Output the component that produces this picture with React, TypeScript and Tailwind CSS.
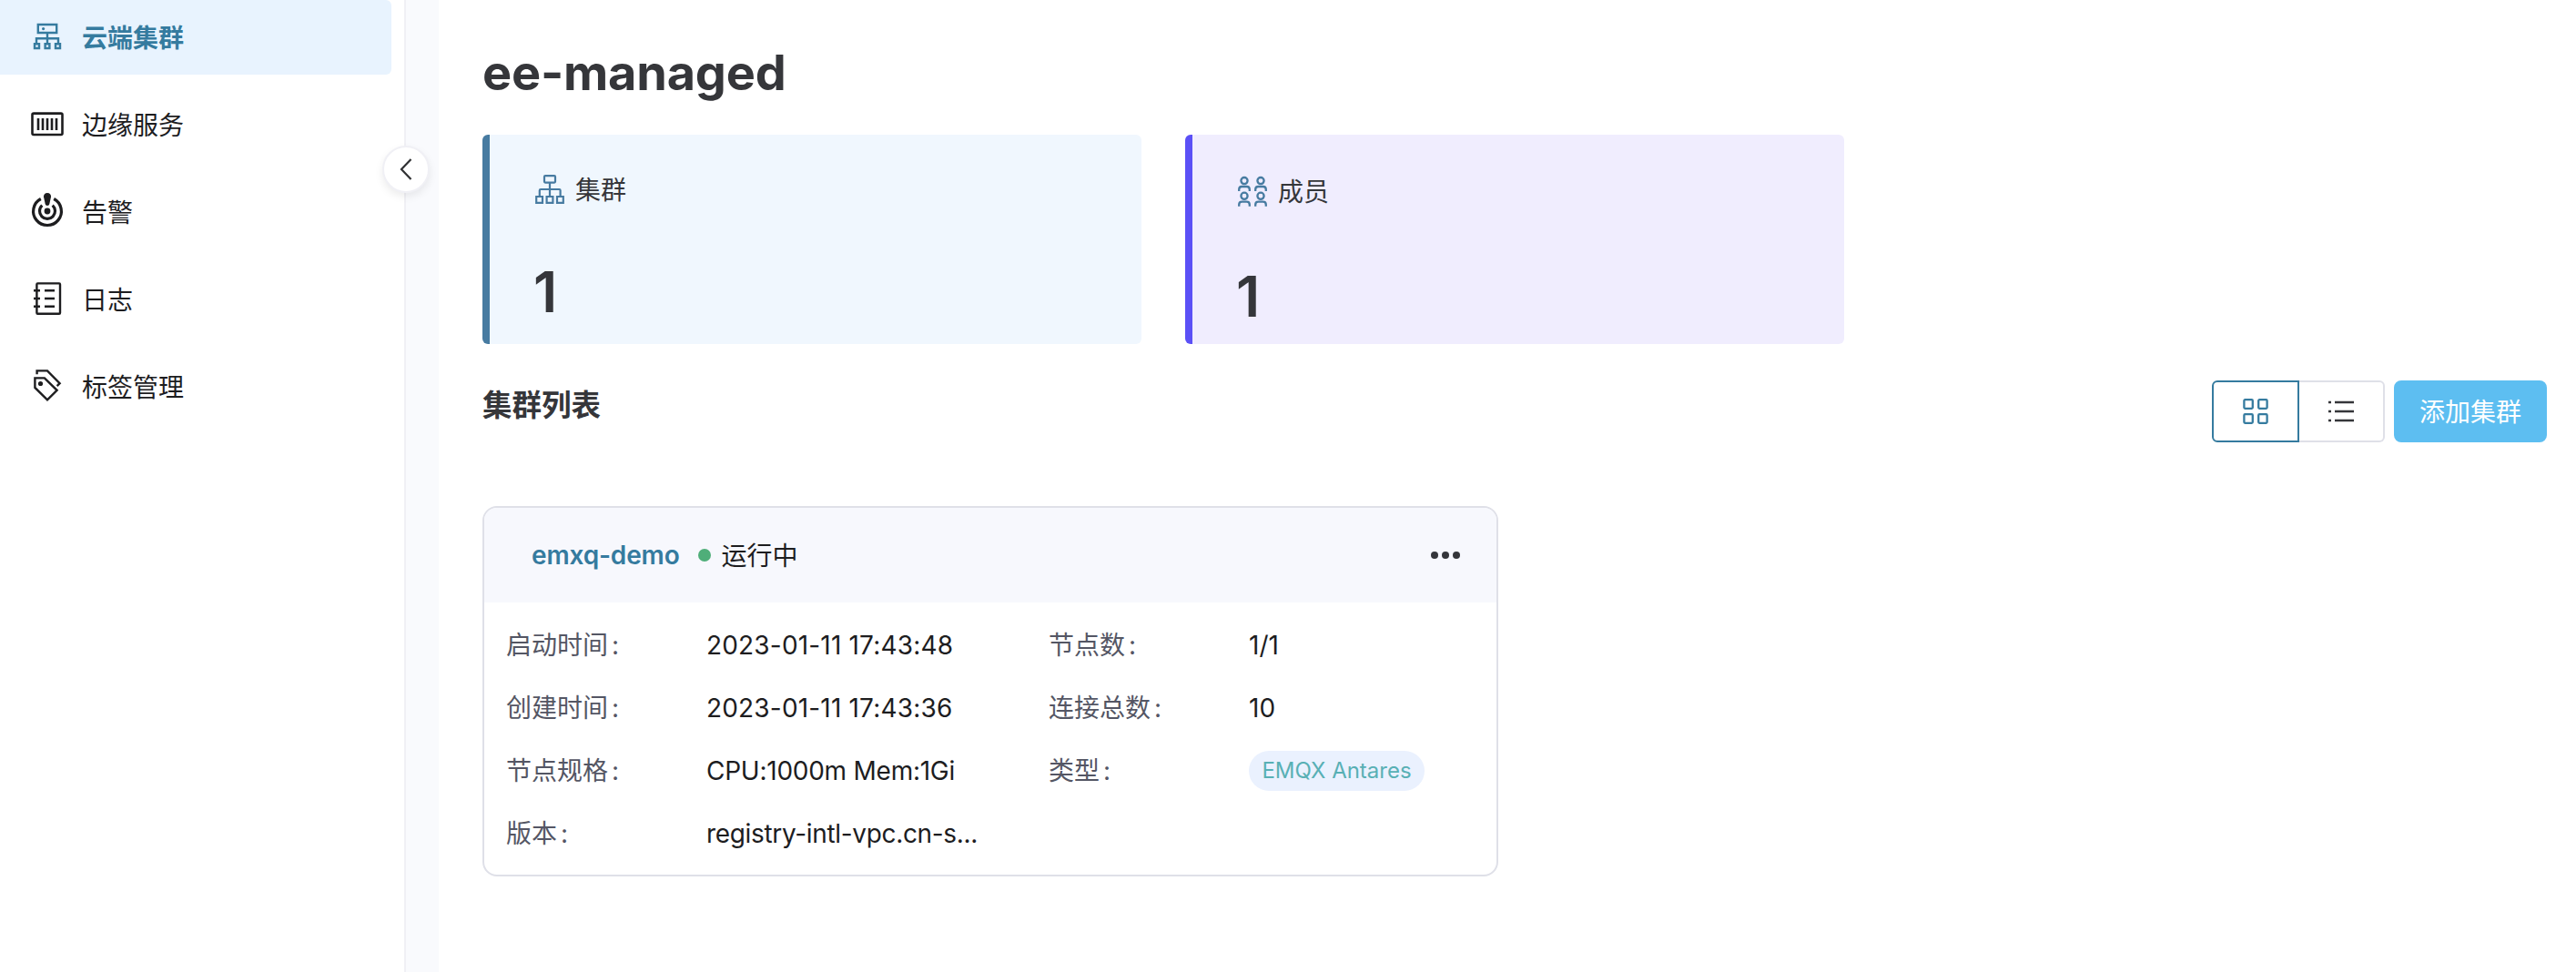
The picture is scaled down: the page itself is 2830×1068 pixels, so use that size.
import type { ReactNode } from "react";

const svg = "block shrink-0 overflow-visible";

function CloudClusterIcon() {
  return (
    <svg className={svg} width="36" height="36" viewBox="0 0 36 36" fill="none" stroke="currentColor" strokeWidth="2.4">
      <path d="M7.8 4H28.2V13H7.8ZM18 13V25M6 25V19.3H30V25" />
      <path d="M4 25.3H9V30H4ZM15.6 25.3H20.4V30H15.6ZM27 25.3H32V30H27Z" />
      <circle cx="13.6" cy="8.6" r="1.6" fill="currentColor" stroke="none" />
    </svg>
  );
}

function EdgeIcon() {
  return (
    <svg className={svg} width="36" height="36" viewBox="0 0 36 36" fill="none" stroke="currentColor" strokeWidth="2.6">
      <rect x="1.5" y="5.6" width="33" height="23.4" rx="1.5" />
      <path d="M8 11V24M13 11V24M18 11V24M23 11V24M28 11V24" />
    </svg>
  );
}

function AlarmIcon() {
  return (
    <svg className={svg} width="36" height="36" viewBox="0 0 36 36" fill="none" stroke="currentColor" strokeWidth="3.2">
      <path d="M10.8 3.5A15.4 15.4 0 1 0 25.2 3.5" />
      <path d="M12.3 10.6A8.5 8.5 0 1 0 23.7 10.6" />
      <circle cx="18" cy="17" r="3.4" fill="currentColor" stroke="none" />
      <path d="M18 -3C20.6 -3 22.2 -1.2 22 1.2L20.4 8.8C20.1 10.2 19.2 11 18 11S15.9 10.2 15.6 8.8L14 1.2C13.8 -1.2 15.4 -3 18 -3Z" fill="currentColor" stroke="none" />
    </svg>
  );
}

function LogIcon() {
  return (
    <svg className={svg} width="36" height="36" viewBox="0 0 36 36" fill="none" stroke="currentColor" strokeWidth="2.4">
      <rect x="6.4" y="0.4" width="25.6" height="33.4" rx="1" />
      <path d="M3 8.2H10M3 17H10M3 25.7H10M15 8.2H26M15 17H26M15 25.7H26" />
    </svg>
  );
}

function TagIcon() {
  return (
    <svg className={svg} width="36" height="36" viewBox="0 0 36 36" fill="none" stroke="currentColor" strokeWidth="2.4">
      <path d="M6.6 4.2V0.4H18L31.6 14.2L28.6 17.1" />
      <path d="M4.4 8.4H14.9L28.6 21.8L18 32.3L4.4 18.9Z" />
      <circle cx="10.5" cy="14.5" r="2.6" fill="currentColor" stroke="none" />
    </svg>
  );
}

function ClusterIcon() {
  return (
    <svg className={svg} width="32" height="32" viewBox="0 0 32 32" fill="none" stroke="#477ba1" strokeWidth="2.2">
      <rect x="10" y="1.2" width="12" height="7.4" rx="1" />
      <path d="M16 8.6V23M4.8 23V17.2Q4.8 16 6 16H26.4Q27.6 16 27.6 17.2V23" />
      <path d="M1.2 24H8V30.8H1.2ZM12.6 24H19.4V30.8H12.6ZM24 24H30.8V30.8H24Z" />
    </svg>
  );
}

function Person({ x, y }: { x: number; y: number }) {
  return (
    <g transform={`translate(${x} ${y})`}>
      <circle cx="7" cy="4.6" r="3.6" />
      <path d="M1.2 16V14.2Q1.2 11 4.4 11H9.6Q12.8 11 12.8 14.2V16" />
    </g>
  );
}

function MembersIcon() {
  return (
    <svg className={svg} width="32" height="32" viewBox="0 0 32 32" fill="none" stroke="#477ba1" strokeWidth="2.3">
      <Person x={0} y={0} />
      <Person x={18} y={0} />
      <Person x={0} y={16.7} />
      <Person x={18} y={16.7} />
    </svg>
  );
}

const menu: { label: string; icon: ReactNode }[] = [
  { label: "云端集群", icon: <CloudClusterIcon /> },
  { label: "边缘服务", icon: <EdgeIcon /> },
  { label: "告警", icon: <AlarmIcon /> },
  { label: "日志", icon: <LogIcon /> },
  { label: "标签管理", icon: <TagIcon /> },
];

function Sidebar() {
  return (
    <aside className="relative w-[446px] shrink-0 border-r-2 border-[#f0f0f5]">
      <nav className="flex flex-col gap-[14px]">
        {menu.map((m, i) => (
          <a
            key={m.label}
            className={
              i === 0
                ? "flex h-[82px] w-[430px] items-center gap-5 rounded-r-md bg-[#e8f3fe] pl-[34px] font-semibold text-[#357b9f]"
                : "flex h-[82px] w-[430px] items-center gap-5 rounded-r-md pl-[34px] text-[#1d1d1f]"
            }
          >
            {m.icon}
            <span className="pt-0.5">{m.label}</span>
          </a>
        ))}
      </nav>
      <button className="absolute top-[160px] -right-[28px] z-10 flex size-[52px] items-center justify-center rounded-full border-2 border-[#f0f0f5] bg-white shadow-[0_4px_10px_rgba(0,0,0,0.08)]">
        <svg className={svg} width="12" height="24" viewBox="0 0 12 24" fill="none" stroke="#303133" strokeWidth="2.2">
          <path d="M11.5 1L1 12L11.5 23" />
        </svg>
      </button>
    </aside>
  );
}

function Field({ label, children }: { label: string; children?: ReactNode }) {
  return (
    <div className="flex h-[69px] items-center">
      <span className="w-[220px] shrink-0 text-[#545664]">
        {label}
        <span className="ml-1">:</span>
      </span>
      <span className="whitespace-nowrap text-[#1d1d1f]">{children}</span>
    </div>
  );
}

export default function App() {
  return (
    <div className="flex h-[1068px] w-[2830px] overflow-hidden bg-white font-['Inter','Noto_Sans_CJK_SC',sans-serif] text-[28px] leading-[40px] text-[#35363a]">
      <Sidebar />
      <div className="w-9 shrink-0 bg-[#f9fafd]" />
      <main className="flex flex-1 flex-col pl-12 pr-8">
        <h1 className="mt-[44px] h-[72px] text-[54px] leading-[72px] font-bold tracking-[-0.2px]">ee-managed</h1>

        <section className="mt-8 flex gap-12">
          <div className="h-[230px] w-[724px] rounded-md border-l-8 border-[#477ba1] bg-[#f0f7fe] pl-[50px]">
            <div className="mt-10 flex h-10 items-center gap-3">
              <ClusterIcon />
              <span className="pt-0.5">集群</span>
            </div>
            <div className="mt-[61px] -ml-0.5 text-[62px] leading-[64px] font-semibold">1</div>
          </div>
          <div className="h-[230px] w-[724px] rounded-md border-l-8 border-[#5b50f6] bg-[#f0edfe] pl-[50px]">
            <div className="mt-[42px] flex h-10 items-center gap-3">
              <MembersIcon />
              <span className="pt-0.5">成员</span>
            </div>
            <div className="mt-[64px] -ml-0.5 text-[62px] leading-[64px] font-semibold">1</div>
          </div>
        </section>

        <section className="mt-10 flex h-[68px] items-center justify-between">
          <h2 className="mb-3 text-[32.5px] font-semibold">集群列表</h2>
          <div className="flex">
            <button className="flex h-[68px] w-24 items-center justify-center rounded-l-md border-2 border-[#357b9f]">
              <svg className={svg} width="28" height="28" viewBox="0 0 28 28" fill="none" stroke="#357b9f" strokeWidth="2.3">
                <rect x="1.4" y="1.2" width="9.4" height="9.6" rx="1" />
                <rect x="17.2" y="1.2" width="9.4" height="9.6" rx="1" />
                <rect x="1.4" y="17.2" width="9.4" height="9.6" rx="1" />
                <rect x="17.2" y="17.2" width="9.4" height="9.6" rx="1" />
              </svg>
            </button>
            <button className="flex h-[68px] w-[94px] items-center justify-center rounded-r-md border-2 border-l-0 border-[#dfe0e8]">
              <svg className={svg} width="28" height="28" viewBox="0 0 28 28" fill="none" stroke="#35363a" strokeWidth="2.4">
                <path d="M0 4H3M7 4H28M0 14H3M7 14H28M0 24H3M7 24H28" />
              </svg>
            </button>
            <button className="ml-[10px] h-[68px] w-[168px] rounded-lg bg-[#5dbef1] pt-0.5 text-white">添加集群</button>
          </div>
        </section>

        <section className="mt-[70px] h-[407px] w-[1116px] overflow-hidden rounded-2xl border-2 border-[#dfe0e8]">
          <header className="flex h-[104px] items-center bg-[#f7f8fd] pr-10 pl-[52px] pb-px">
            <span className="font-semibold tracking-[-0.15px] text-[#357b9f]">emxq-demo</span>
            <span className="ml-5 size-[14px] rounded-full bg-[#4fae79]" />
            <span className="ml-3 pt-0.5 text-[#1d1d1f]">运行中</span>
            <span className="ml-auto flex gap-1">
              <i className="size-2 rounded-full bg-[#35363a]" />
              <i className="size-2 rounded-full bg-[#35363a]" />
              <i className="size-2 rounded-full bg-[#35363a]" />
            </span>
          </header>
          <div className="grid grid-cols-[596px_1fr] pt-3 pl-6">
            <Field label="启动时间">
              <span className="tracking-[0.18px]">2023-01-11 17:43:48</span>
            </Field>
            <Field label="节点数">1/1</Field>
            <Field label="创建时间">
              <span className="tracking-[0.18px]">2023-01-11 17:43:36</span>
            </Field>
            <Field label="连接总数">10</Field>
            <Field label="节点规格">
              <span className="tracking-[-0.25px]">CPU:1000m Mem:1Gi</span>
            </Field>
            <Field label="类型">
              <span className="flex h-11 w-[193px] items-center justify-center rounded-full bg-[#eaf1fe] pt-px text-[24px] text-[#58b0b5]">
                EMQX Antares
              </span>
            </Field>
            <Field label="版本">
              <span className="tracking-[-0.33px]">registry-intl-vpc.cn-s...</span>
            </Field>
          </div>
        </section>
      </main>
    </div>
  );
}
